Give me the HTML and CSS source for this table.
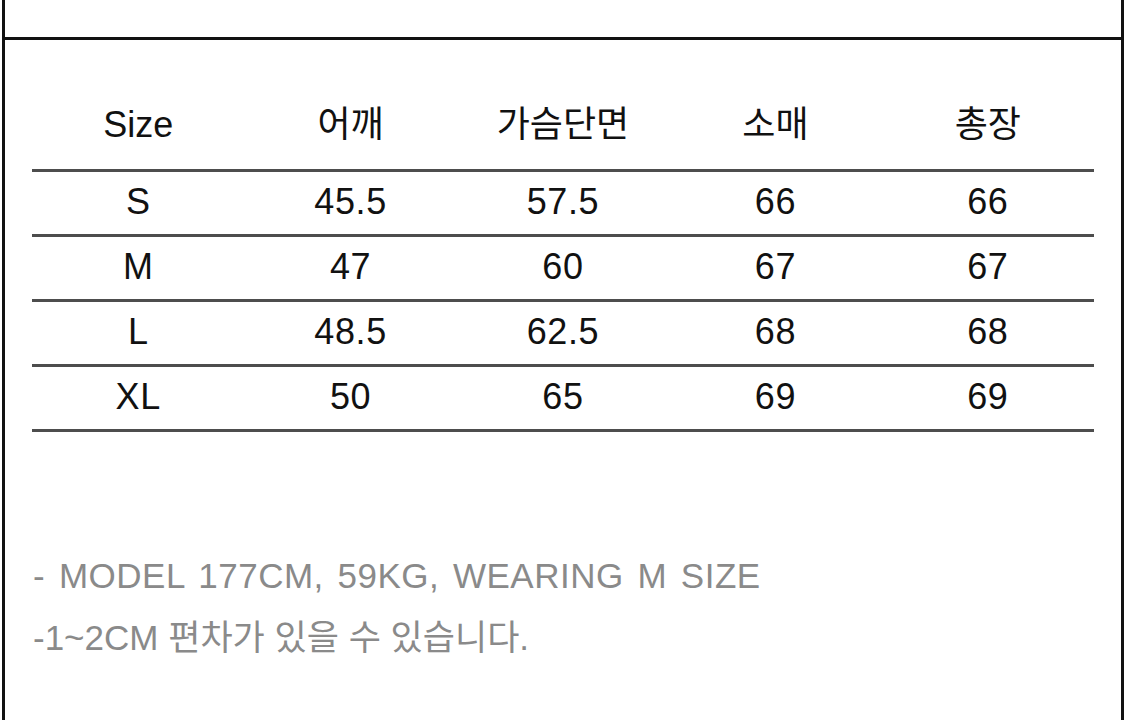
FILE: index.html
```html
<!DOCTYPE html>
<html lang="ko">
<head>
<meta charset="utf-8">
<title>Size Chart</title>
<link rel="stylesheet" href="styles.css">
</head>
<body>
<div class="frame">
  <div class="top"></div>
  <div class="chart">
    <div class="row head">
      <div>Size</div><div>어깨</div><div>가슴단면</div><div>소매</div><div>총장</div>
    </div>
    <div class="row"><div>S</div><div>45.5</div><div>57.5</div><div>66</div><div>66</div></div>
    <div class="row"><div>M</div><div>47</div><div>60</div><div>67</div><div>67</div></div>
    <div class="row"><div>L</div><div>48.5</div><div>62.5</div><div>68</div><div>68</div></div>
    <div class="row"><div>XL</div><div>50</div><div>65</div><div>69</div><div>69</div></div>
  </div>
  <div class="notes">
    <p class="wide">- MODEL 177CM, 59KG, WEARING M SIZE</p>
    <p>-1~2CM 편차가 있을 수 있습니다.</p>
  </div>
</div>
</body>
</html>
```

FILE: styles.css
```css
html, body {
  margin: 0;
  padding: 0;
  background: #fff;
}
body {
  font-family: "Liberation Sans", "Noto Sans CJK KR", sans-serif;
  color: #111;
}
.frame {
  margin-left: 2px;
  width: 1116px;
  height: 720px;
  border-left: 3px solid #111;
  border-right: 3px solid #111;
  overflow: hidden;
}
.top {
  height: 37px;
  border-bottom: 3px solid #111;
}
.chart {
  margin: 54px 27px 0 27px;
}
.row {
  display: grid;
  grid-template-columns: repeat(5, 1fr);
  height: 62px;
  line-height: 60px;
  font-size: 36px;
  letter-spacing: 0.6px;
  text-align: center;
  border-bottom: 3px solid #4d4d4d;
}
.row.head {
  height: 75px;
  line-height: 62px;
  letter-spacing: 0;
}
.notes {
  margin: 113px 0 0 28px;
  color: #8a8a8a;
  font-size: 35px;
}
.notes p {
  margin: 0;
  height: 62px;
  line-height: 62px;
}
.notes .wide {
  letter-spacing: 0.5px;
  word-spacing: 3.5px;
}
```
